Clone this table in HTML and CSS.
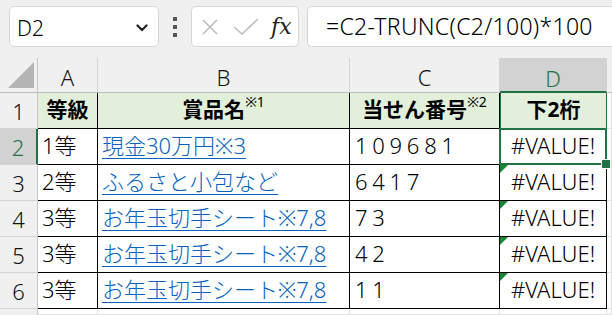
FILE: index.html
```html
<!DOCTYPE html>
<html lang="ja">
<head>
<meta charset="utf-8">
<link rel="stylesheet" href="styles.css">
</head>
<body>
<div class="toolbar">
  <div class="namebox">
    <span class="name">D2</span>
    <svg class="chev" width="12" height="8" viewBox="0 0 12 8"><path d="M1.5 1.5 L6 6 L10.5 1.5" fill="none" stroke="#222" stroke-width="2.2" stroke-linecap="round" stroke-linejoin="round"/></svg>
  </div>
  <div class="dots"><i></i><i></i><i></i></div>
  <div class="fxbox">
    <svg width="18" height="18" viewBox="0 0 18 18"><path d="M2 2 L16 16 M16 2 L2 16" stroke="#bdbdbd" stroke-width="1.6" fill="none"/></svg>
    <svg width="26" height="18" viewBox="0 0 26 18"><path d="M1 9 L9 16 L25 1" stroke="#bdbdbd" stroke-width="1.6" fill="none"/></svg>
    <span class="fx">fx</span>
  </div>
  <div class="formula">=C2-TRUNC(C2/100)*100</div>
</div>
<div class="sheet">
  <div class="corner"></div>
  <div class="ch">A</div>
  <div class="ch">B</div>
  <div class="ch">C</div>
  <div class="ch ch-sel">D</div>
  <div class="ch ch-e"></div>

  <div class="rh">1</div>
  <div class="c hd">等級</div>
  <div class="c hd">賞品名<sup>※1</sup></div>
  <div class="c hd">当せん番号<sup>※2</sup></div>
  <div class="c hd hd-d">下2桁</div>
  <div class="g"></div>

  <div class="rh rh-sel">2</div>
  <div class="c">1等</div>
  <div class="c"><a>現金30万円※3</a></div>
  <div class="c num">1 0 9 6 8 1</div>
  <div class="c err sel">#VALUE!</div>
  <div class="g"></div>

  <div class="rh">3</div>
  <div class="c">2等</div>
  <div class="c"><a>ふるさと小包など</a></div>
  <div class="c num">6 4 1 7</div>
  <div class="c err tri">#VALUE!</div>
  <div class="g"></div>

  <div class="rh">4</div>
  <div class="c">3等</div>
  <div class="c"><a>お年玉切手シート※7,8</a></div>
  <div class="c num">7 3</div>
  <div class="c err tri">#VALUE!</div>
  <div class="g"></div>

  <div class="rh">5</div>
  <div class="c">3等</div>
  <div class="c"><a>お年玉切手シート※7,8</a></div>
  <div class="c num">4 2</div>
  <div class="c err tri">#VALUE!</div>
  <div class="g"></div>

  <div class="rh">6</div>
  <div class="c">3等</div>
  <div class="c"><a>お年玉切手シート※7,8</a></div>
  <div class="c num">1 1</div>
  <div class="c err tri">#VALUE!</div>
  <div class="g"></div>

  <div class="rh rh-last"></div>
  <div class="g"></div>
  <div class="g"></div>
  <div class="g"></div>
  <div class="g"></div>
  <div class="g"></div>
</div>
</body>
</html>
```

FILE: styles.css
```css
* { box-sizing: border-box; }
html, body { margin: 0; padding: 0; }
body {
  width: 612px;
  height: 315px;
  overflow: hidden;
  background: #f0f0f0;
  font-family: "Noto Sans", "Noto Sans CJK JP", sans-serif;
  font-weight: 300;
  color: #000;
}
.toolbar {
  height: 58px;
  display: flex;
  align-items: flex-start;
  padding: 6px 0 0 9px;
}
.namebox {
  width: 150px;
  height: 41px;
  background: #fff;
  border: 1px solid #d6d6d6;
  border-radius: 5px;
  display: flex;
  align-items: center;
  justify-content: space-between;
  padding: 2px 10px 0 7px;
}
.name { font-size: 21px; }
.dots {
  width: 32px;
  height: 41px;
  display: flex;
  flex-direction: column;
  align-items: center;
  justify-content: center;
  gap: 4px;
}
.dots i { display: block; width: 4px; height: 4px; background: #555; }
.fxbox {
  width: 108px;
  height: 41px;
  background: #fff;
  border: 1px solid #d6d6d6;
  border-radius: 5px;
  display: flex;
  align-items: center;
  gap: 14px;
  padding: 0 0 0 9px;
}
.fx {
  font-family: "DejaVu Serif", "Liberation Serif", serif;
  font-style: italic;
  font-weight: 400;
  font-size: 22px;
  color: #222;
  margin-left: -2px;
}
.formula {
  flex: 1;
  margin-left: 8px;
  height: 41px;
  background: #fff;
  border: 1px solid #d6d6d6;
  border-right: none;
  border-radius: 5px 0 0 5px;
  font-size: 23px;
  letter-spacing: 0.3px;
  line-height: 39px;
  padding-left: 18px;
}
.sheet {
  display: grid;
  grid-template-columns: 38px 60px 252px 150px 107px 1fr;
  grid-template-rows: 35px repeat(6, 36px) 1fr;
  height: 257px;
  background: #fff;
}
.corner {
  background: #f0f0f0;
  border-right: 1px solid #c6c6c6;
  border-bottom: 1px solid #bdbdbd;
  position: relative;
}
.corner::after {
  content: "";
  position: absolute;
  right: 3px;
  bottom: 4px;
  border-style: solid;
  border-width: 0 0 26px 26px;
  border-color: transparent transparent #b4b4b4 transparent;
}
.ch {
  background: #f0f0f0;
  border-right: 1px solid #d4d4d4;
  border-bottom: 1px solid #bdbdbd;
  display: flex;
  align-items: center;
  justify-content: center;
  font-size: 22px;
  padding-top: 4px;
  color: #111;
}
.ch-sel {
  background: #d2d2d2;
  color: #217346;
  border-bottom: 2px solid #217346;
  padding-top: 6px;
}
.ch-e { border-right: none; }
.rh {
  background: #f0f0f0;
  border-right: 1px solid #c6c6c6;
  border-bottom: 1px solid #d4d4d4;
  display: flex;
  align-items: center;
  justify-content: center;
  font-size: 22px;
  color: #111;
}
.rh-sel {
  background: #d2d2d2;
  color: #217346;
  border-right: 2px solid #217346;
}
.rh-last { border-bottom: none; }
.c {
  border-right: 1px solid #000;
  border-bottom: 1px solid #000;
  display: flex;
  align-items: flex-end;
  padding: 0 0 4px 4px;
  font-size: 22px;
  line-height: 30px;
  white-space: nowrap;
  position: relative;
}
.hd {
  background: #e2efda;
  font-weight: bold;
  font-size: 21px;
  justify-content: center;
  padding-left: 0;
}
.hd sup {
  font-size: 14px;
  font-weight: 400;
  line-height: 1;
  align-self: flex-start;
  margin-top: 2px;
}
.hd-d {
  border-left: 1px solid #217346;
  border-right: 1px solid #217346;
}
.c a {
  color: #0563c1;
  text-decoration: underline;
  text-decoration-thickness: 1px;
  text-underline-offset: 4px;
}
.num { padding-left: 5px; word-spacing: -1px; }
.err { justify-content: center; padding-left: 0; }
.tri::before {
  content: "";
  position: absolute;
  left: 0;
  top: 0;
  border-style: solid;
  border-width: 8px 8px 0 0;
  border-color: #138a2e transparent transparent transparent;
}
.sel::after {
  content: "";
  position: absolute;
  left: -1px;
  top: -1px;
  right: -1px;
  bottom: -1px;
  border: 2px solid #217346;
}
.sel::before {
  content: "";
  position: absolute;
  right: -5px;
  bottom: -5px;
  width: 8px;
  height: 8px;
  background: #217346;
  border: 1px solid #fff;
  z-index: 2;
}
.g {
  border-right: 1px solid #e1e1e1;
  border-bottom: 1px solid #e1e1e1;
}
```
